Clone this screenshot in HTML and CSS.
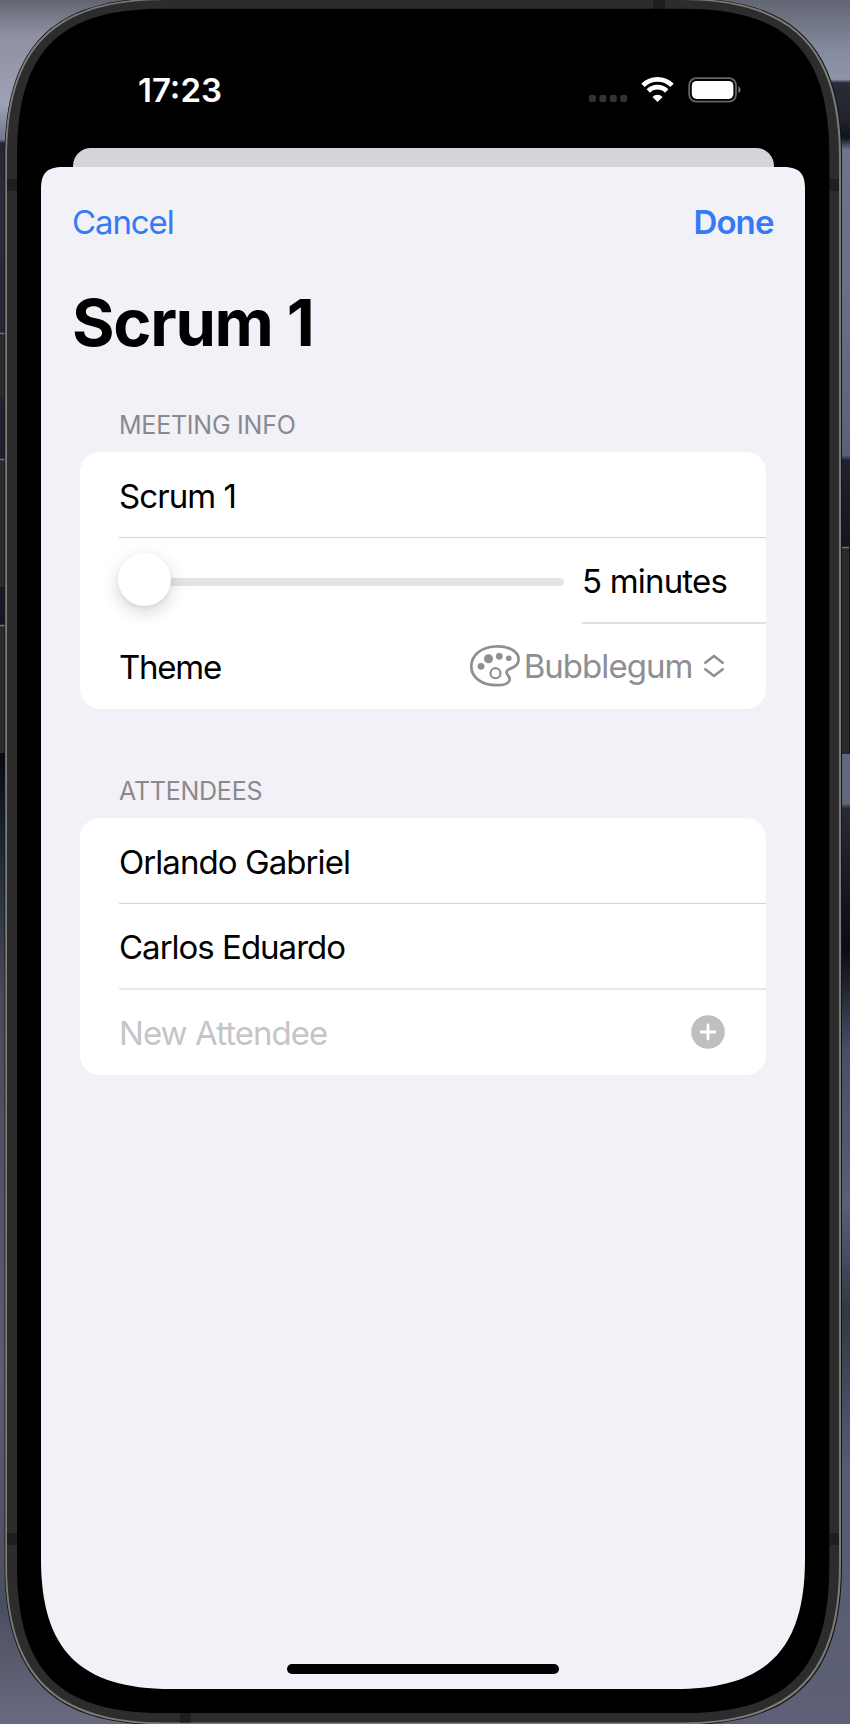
FILE: index.html
```html
<!DOCTYPE html>
<html lang="en">
<head>
<meta charset="utf-8">
<title>Scrum 1</title>
<link rel="stylesheet" href="styles.css">
</head>
<body>
<main class="desktop">
  <svg class="backdrop" viewBox="0 0 850 1724" aria-hidden="true">
    <defs>
      <linearGradient id="skyLeft" x1="0" y1="0" x2="0" y2="1">
        <stop offset="0" stop-color="#62646f"/><stop offset=".02" stop-color="#8f91a2"/><stop offset=".06" stop-color="#9fa1b5"/><stop offset=".081" stop-color="#74778a"/>
        <stop offset=".083" stop-color="#242632"/><stop offset=".12" stop-color="#2b2d3c"/><stop offset=".36" stop-color="#141824"/><stop offset=".44" stop-color="#070c13"/><stop offset=".5" stop-color="#252b36"/>
        <stop offset=".58" stop-color="#484b5b"/><stop offset=".8" stop-color="#5a5d72"/><stop offset=".93" stop-color="#4b4e5e"/><stop offset="1" stop-color="#686b80"/>
      </linearGradient>
      <linearGradient id="skyRight" x1="0" y1="0" x2="0" y2="1">
        <stop offset="0" stop-color="#626674"/><stop offset=".03" stop-color="#858ba0"/><stop offset=".046" stop-color="#8f95ab"/>
        <stop offset=".048" stop-color="#292b36"/><stop offset=".07" stop-color="#20222e"/><stop offset=".08" stop-color="#0e1420"/><stop offset=".087" stop-color="#6f7488"/><stop offset=".18" stop-color="#696d86"/><stop offset=".264" stop-color="#5b6078"/>
        <stop offset=".267" stop-color="#20232d"/><stop offset=".32" stop-color="#11151e"/><stop offset=".437" stop-color="#62677c"/><stop offset=".466" stop-color="#62677c"/>
        <stop offset=".469" stop-color="#292b34"/><stop offset=".55" stop-color="#090c13"/><stop offset=".61" stop-color="#4b4e63"/><stop offset=".7" stop-color="#5a5e76"/><stop offset=".76" stop-color="#323744"/><stop offset=".85" stop-color="#565b70"/><stop offset="1" stop-color="#5d6076"/>
      </linearGradient>
    </defs>
    <rect width="425" height="1724" fill="url(#skyLeft)"/>
    <rect x="425" width="425" height="1724" fill="url(#skyRight)"/>
    <!-- side buttons -->
    <path d="M0 333H8V397H0ZM0 459H8V587H0ZM0 625H8V753H0ZM840 547H849V754H840Z" fill="#2b2b2b"/>
    <path d="M0 333.500H6M0 459.500H6M0 625.500H6M840 547.500H849" stroke="#737373" stroke-width="1.500"/>
    <path d="M849.500 548V754" stroke="#151515"/>
    <!-- body: shadow line, polished rim, band, glass -->
    <path d="M4.500 158C4.500 46 52-2 164-2H682C794-2 842 46 842 158V1564C842 1677 794 1725 682 1725H164C52 1725 4.500 1677 4.500 1564Z" fill="#131313"/>
    <path d="M5.200 158C5.200 46 53-1.500 165-1.500H681C793-1.500 841 46 841 158V1564C841 1676 793 1724.300 681 1724.300H165C53 1724.300 5.200 1676 5.200 1564Z" fill="#7b7b79"/>
    <path d="M7 158C7 47 55 0 166 0H680C791 0 839 47 839 158V1564C839 1675 791 1722.500 680 1722.500H166C55 1722.500 7 1675 7 1564Z" fill="#2c2c2c"/>
    <path d="M653-2h12V10h-12ZM7 179H18V191H7ZM828 179H839V191H828ZM7 1533H18V1545H7ZM828 1533H839V1545H828ZM180 1711H191V1722.500H180Z" fill="#1e1e1e"/>
    <path d="M17 156C17 51 59 8.700 163 8.700H683C787 8.700 829.300 51 829.300 156V1566C829.300 1671 787 1713 683 1713H163C59 1713 17 1671 17 1566Z" fill="#000"/>
  </svg>

  <section class="phone">
    <header class="status">
      <time class="clock">17:23</time>
      <svg class="status-icons" width="156" height="28" viewBox="0 0 156 28" aria-hidden="true">
        <g fill="#333"><rect x="1" y="19" width="7" height="7" rx="2"/><rect x="11.400" y="19" width="7" height="7" rx="2"/><rect x="21.800" y="19" width="7" height="7" rx="2"/><rect x="32.200" y="19" width="7" height="7" rx="2"/></g>
        <g fill="none" stroke="#fff" stroke-width="4.800">
          <path d="M55 9.400A20.500 20.500 0 0 1 84 9.400"/>
          <path d="M60.300 15A12.900 12.900 0 0 1 78.700 15"/>
        </g>
        <path d="M69.500 26 64.400 20.900A7.200 7.200 0 0 1 74.600 20.900Z" fill="#fff"/>
        <rect x="101.200" y="2.200" width="46.800" height="23.400" rx="7" fill="none" stroke="#666" stroke-width="1.800"/>
        <rect x="103.800" y="4.900" width="41.600" height="18" rx="4.800" fill="#fff"/>
        <path d="M150.300 10.200C153.300 11.600 153.300 15.800 150.300 17.200Z" fill="#777"/>
      </svg>
    </header>

    <div class="back-sheet"></div>
    <div class="sheet">
      <nav class="bar">
        <a class="cancel">Cancel</a>
        <a class="done">Done</a>
      </nav>
      <h1 class="title">Scrum 1</h1>

      <h2 class="caption meeting">MEETING INFO</h2>
      <div class="card">
        <div class="row line"><span class="name">Scrum 1</span></div>
        <div class="row slider-row">
          <div class="slider"><i class="track"></i><i class="thumb"></i></div>
          <div class="value line"><span class="minutes">5 minutes</span></div>
        </div>
        <div class="row">
          <span class="theme">Theme</span>
          <span class="picker">
            <svg width="50" height="42" viewBox="0 0 50 42" aria-hidden="true">
              <path d="M25.500 1.500C38 .8 48.600 6 48.600 14.300C48.600 19.500 45 22.100 40.500 23.600C36.500 25 35.400 27 37.700 30C41.700 34.500 40 40 27.500 40.200C12 40.500 1.300 32.500 1.300 21.500C1.300 10 11 2.200 25.500 1.500Z" fill="none" stroke="#8e8e93" stroke-width="2.700"/>
              <circle cx="18.500" cy="13.800" r="4.500" fill="#8e8e93"/><circle cx="29.300" cy="11.300" r="3.400" fill="#8e8e93"/><circle cx="38.800" cy="13.300" r="2.800" fill="#8e8e93"/><circle cx="11" cy="21.300" r="3.400" fill="#8e8e93"/>
              <circle cx="25.500" cy="28.200" r="5" fill="none" stroke="#8e8e93" stroke-width="2.200"/>
            </svg>
            <span class="bubblegum">Bubblegum</span>
            <svg class="updown" width="20" height="24" viewBox="0 0 20 24" fill="none" stroke="#8e8e93" stroke-width="2.500" stroke-linecap="round" stroke-linejoin="round" aria-hidden="true"><path d="M1.300 8.700 10 2 18.700 8.700M1.300 15.300 10 22 18.700 15.300"/></svg>
          </span>
        </div>
      </div>

      <h2 class="caption attendees">ATTENDEES</h2>
      <div class="card">
        <div class="row line"><span class="orlando">Orlando Gabriel</span></div>
        <div class="row line soft"><span class="carlos">Carlos Eduardo</span></div>
        <div class="row">
          <span class="placeholder">New Attendee</span>
          <svg class="add" width="34" height="34" viewBox="0 0 34 34" aria-hidden="true"><circle cx="17" cy="17" r="16.800" fill="#bfbfbf"/><path d="M17 10V24M10 17H24" stroke="#fff" stroke-width="2.800" stroke-linecap="round"/></svg>
        </div>
      </div>
      <div class="home"></div>
    </div>
  </section>
</main>
</body>
</html>
```
FILE: styles.css
```css
* { box-sizing: border-box; }
body { margin: 0; font-family: Inter, "Liberation Sans", sans-serif; font-size: 33px; line-height: 40px; letter-spacing: -.93px; color: #000; }
.desktop { position: relative; width: 850px; height: 1724px; overflow: hidden; }
.backdrop { position: absolute; inset: 0; width: 850px; height: 1724px; }
.phone { position: relative; width: 764px; margin-left: 41px; display: flex; flex-direction: column; }

.status { height: 147.500px; padding: 69px 61px 0 97px; display: flex; justify-content: space-between; align-items: flex-start; }
.clock { margin-top: 1px; color: #fff; font-weight: 600; letter-spacing: 0; white-space: nowrap; }
.status-icons { margin-top: 7px; }

.back-sheet { height: 19.500px; margin: 0 31.500px; border-radius: 18px 18px 0 0; background: #d5d4d9; }
.sheet { height: 1522px; background: #f2f1f7; display: flex; flex-direction: column; align-items: stretch;
  clip-path: path("M0 22C0 6 6 0 22 0H742C758 0 764 6 764 22V1392C764 1483 725 1522 634 1522H130C39 1522 0 1483 0 1392Z"); }
.bar { display: flex; justify-content: space-between; padding: 35px 31px 0 31px; height: 115px; color: #347af6; }
.cancel { letter-spacing: -1.1px; }
.done { font-weight: 600; letter-spacing: -.9px; margin-right: .5px; }
.title { margin: 0; padding: 1px 0 0 31px; height: 80px; font-size: 65px; line-height: 80px; font-weight: 700; letter-spacing: -1.3px; white-space: nowrap; }
.caption { margin: 0; padding: 0 0 0 78px; height: 30px; font-size: 25px; line-height: 30px; font-weight: 400; letter-spacing: -.24px; color: #8a8a8e; }
.meeting { margin-top: 48px; }
.attendees { margin-top: 67.500px; }
.card { height: 256.500px; margin: 12px 39px 0; border-radius: 20px; background: #fff; display: flex; flex-direction: column; }
.row { position: relative; flex: 1; padding: 0 41px 0 39px; display: flex; justify-content: space-between; align-items: center; white-space: nowrap; }
.row > span:first-child { padding-top: 2px; }
.row.line::after, .value.line::after { content: ""; position: absolute; left: 39px; right: 0; bottom: 0; height: 1px; background: #d5d5d8; }
.row.soft::after { bottom: -1px; height: 2px; background: #e8e8ea; }
.slider-row { align-items: stretch; padding-right: 0; }
.slider { position: relative; width: 465px; margin-left: -20px; padding-left: 20px; display: flex; align-items: center; overflow: hidden; }
.track { flex: 1; height: 8px; margin-top: 3px; border-radius: 4px; background: #e4e4e6; }
.thumb { position: absolute; left: 19px; top: 15px; width: 53px; height: 53px; border-radius: 50%; background: #fff; box-shadow: 0 6px 18px rgba(0,0,0,.16), 0 2px 4px rgba(0,0,0,.06); }
.value { position: relative; width: 184px; display: flex; align-items: center; padding-top: 2px; }
.minutes { letter-spacing: -.82px; }
.value.line::after { left: 0; bottom: -.5px; height: 1.500px; background: #e0e0e2; }
.theme { letter-spacing: -1.250px; }
.row > .picker { display: flex; align-items: center; color: #8e8e93; margin-right: 1.500px; }
.bubblegum { margin-left: 4px; letter-spacing: -.95px; }
.updown { margin-left: 11px; }
.carlos { letter-spacing: -1px; }
.placeholder { color: #c5c5c7; letter-spacing: -.95px; }
.home { width: 272px; height: 10px; margin: auto auto 15px; border-radius: 5px; background: #000; }
```
